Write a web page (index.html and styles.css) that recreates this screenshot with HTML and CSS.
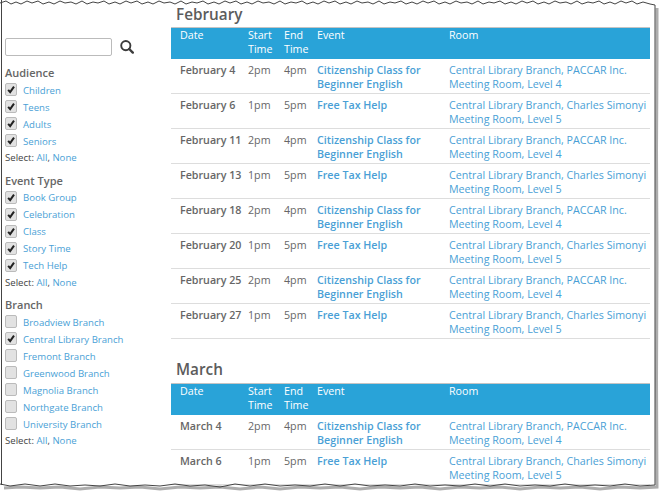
FILE: index.html
```html
<!DOCTYPE html>
<html lang="en">
<head>
<meta charset="utf-8">
<title>Events</title>
<link rel="stylesheet" href="styles.css">
</head>
<body>
<div class="frame">
  <aside class="side">
    <div class="search">
      <input class="search-box" type="text" aria-label="Search">
      <svg class="search-icon" viewBox="0 0 14 14"><circle cx="5.8" cy="5.6" r="4.6" fill="none" stroke="#3c3c3c" stroke-width="1.9"/><path d="M9.2 9 L12.8 12.6" stroke="#3c3c3c" stroke-width="2.4" stroke-linecap="round"/></svg>
    </div>
    <section class="group">
      <h3>Audience</h3>
      <div class="opt"><span class="cb on"><svg viewBox="0 0 12 12"><path d="M2.6 6.4 L5 9.2 L9.6 2.6" fill="none" stroke="#222" stroke-width="2.4"/></svg></span><a>Children</a></div>
      <div class="opt"><span class="cb on"><svg viewBox="0 0 12 12"><path d="M2.6 6.4 L5 9.2 L9.6 2.6" fill="none" stroke="#222" stroke-width="2.4"/></svg></span><a>Teens</a></div>
      <div class="opt"><span class="cb on"><svg viewBox="0 0 12 12"><path d="M2.6 6.4 L5 9.2 L9.6 2.6" fill="none" stroke="#222" stroke-width="2.4"/></svg></span><a>Adults</a></div>
      <div class="opt"><span class="cb on"><svg viewBox="0 0 12 12"><path d="M2.6 6.4 L5 9.2 L9.6 2.6" fill="none" stroke="#222" stroke-width="2.4"/></svg></span><a>Seniors</a></div>
      <p class="sel">Select: <a>All</a>, <a>None</a></p>
    </section>
    <section class="group">
      <h3>Event Type</h3>
      <div class="opt"><span class="cb on"><svg viewBox="0 0 12 12"><path d="M2.6 6.4 L5 9.2 L9.6 2.6" fill="none" stroke="#222" stroke-width="2.4"/></svg></span><a>Book Group</a></div>
      <div class="opt"><span class="cb on"><svg viewBox="0 0 12 12"><path d="M2.6 6.4 L5 9.2 L9.6 2.6" fill="none" stroke="#222" stroke-width="2.4"/></svg></span><a>Celebration</a></div>
      <div class="opt"><span class="cb on"><svg viewBox="0 0 12 12"><path d="M2.6 6.4 L5 9.2 L9.6 2.6" fill="none" stroke="#222" stroke-width="2.4"/></svg></span><a>Class</a></div>
      <div class="opt"><span class="cb on"><svg viewBox="0 0 12 12"><path d="M2.6 6.4 L5 9.2 L9.6 2.6" fill="none" stroke="#222" stroke-width="2.4"/></svg></span><a>Story Time</a></div>
      <div class="opt"><span class="cb on"><svg viewBox="0 0 12 12"><path d="M2.6 6.4 L5 9.2 L9.6 2.6" fill="none" stroke="#222" stroke-width="2.4"/></svg></span><a>Tech Help</a></div>
      <p class="sel">Select: <a>All</a>, <a>None</a></p>
    </section>
    <section class="group">
      <h3>Branch</h3>
      <div class="opt"><span class="cb"></span><a>Broadview Branch</a></div>
      <div class="opt"><span class="cb on"><svg viewBox="0 0 12 12"><path d="M2.6 6.4 L5 9.2 L9.6 2.6" fill="none" stroke="#222" stroke-width="2.4"/></svg></span><a>Central Library Branch</a></div>
      <div class="opt"><span class="cb"></span><a>Fremont Branch</a></div>
      <div class="opt"><span class="cb"></span><a>Greenwood Branch</a></div>
      <div class="opt"><span class="cb"></span><a>Magnolia Branch</a></div>
      <div class="opt"><span class="cb"></span><a>Northgate Branch</a></div>
      <div class="opt"><span class="cb"></span><a>University Branch</a></div>
      <p class="sel">Select: <a>All</a>, <a>None</a></p>
    </section>
  </aside>
  <main class="main">
    <h2>February</h2>
    <table>
      <colgroup><col class="c-date"><col class="c-start"><col class="c-end"><col class="c-event"><col class="c-room"></colgroup>
      <thead><tr><th>Date</th><th>Start Time</th><th>End Time</th><th>Event</th><th>Room</th></tr></thead>
      <tbody>
        <tr><td class="d">February 4</td><td>2pm</td><td>4pm</td><td><a class="ev">Citizenship Class for Beginner English</a></td><td><a>Central Library Branch, PACCAR Inc. Meeting Room, Level 4</a></td></tr>
        <tr><td class="d">February 6</td><td>1pm</td><td>5pm</td><td><a class="ev">Free Tax Help</a></td><td><a>Central Library Branch, Charles Simonyi Meeting Room, Level 5</a></td></tr>
        <tr><td class="d">February 11</td><td>2pm</td><td>4pm</td><td><a class="ev">Citizenship Class for Beginner English</a></td><td><a>Central Library Branch, PACCAR Inc. Meeting Room, Level 4</a></td></tr>
        <tr><td class="d">February 13</td><td>1pm</td><td>5pm</td><td><a class="ev">Free Tax Help</a></td><td><a>Central Library Branch, Charles Simonyi Meeting Room, Level 5</a></td></tr>
        <tr><td class="d">February 18</td><td>2pm</td><td>4pm</td><td><a class="ev">Citizenship Class for Beginner English</a></td><td><a>Central Library Branch, PACCAR Inc. Meeting Room, Level 4</a></td></tr>
        <tr><td class="d">February 20</td><td>1pm</td><td>5pm</td><td><a class="ev">Free Tax Help</a></td><td><a>Central Library Branch, Charles Simonyi Meeting Room, Level 5</a></td></tr>
        <tr><td class="d">February 25</td><td>2pm</td><td>4pm</td><td><a class="ev">Citizenship Class for Beginner English</a></td><td><a>Central Library Branch, PACCAR Inc. Meeting Room, Level 4</a></td></tr>
        <tr><td class="d">February 27</td><td>1pm</td><td>5pm</td><td><a class="ev">Free Tax Help</a></td><td><a>Central Library Branch, Charles Simonyi Meeting Room, Level 5</a></td></tr>
      </tbody>
    </table>
    <h2 class="next">March</h2>
    <table>
      <colgroup><col class="c-date"><col class="c-start"><col class="c-end"><col class="c-event"><col class="c-room"></colgroup>
      <thead><tr><th>Date</th><th>Start Time</th><th>End Time</th><th>Event</th><th>Room</th></tr></thead>
      <tbody>
        <tr><td class="d">March 4</td><td>2pm</td><td>4pm</td><td><a class="ev">Citizenship Class for Beginner English</a></td><td><a>Central Library Branch, PACCAR Inc. Meeting Room, Level 4</a></td></tr>
        <tr><td class="d">March 6</td><td>1pm</td><td>5pm</td><td><a class="ev">Free Tax Help</a></td><td><a>Central Library Branch, Charles Simonyi Meeting Room, Level 5</a></td></tr>
      </tbody>
    </table>
  </main>
</div>
<svg class="torn" viewBox="0 0 665 499" aria-hidden="true">
  <path class="edge-shadow" d="M657 8 L657 60 L656.5 150 L657 260 L656.5 380 L657 487 L640 488 L620 487 L600 489 L580 487 L560 488 L540 487 L520 489 L500 487 L480 488 L460 487 L440 489 L420 487 L400 488 L380 487 L360 489 L340 487 L320 488 L300 487 L280 489 L260 487 L240 489 L220 487 L200 488 L180 487 L160 489 L140 487 L120 488 L100 487 L80 489 L60 487 L40 488 L20 487 L4 488"/>
  <path class="edge-top" d="M0 3 L6 1 L11 4 L16 2 L21 4 L27 1 L32 3 L38 1 L43 4 L49 2 L54 4 L60 1 L65 3 L71 2 L76 4 L82 1 L87 4 L93 2 L98 3 L104 1 L109 4 L115 2 L120 4 L126 1 L131 3 L137 1 L142 4 L148 2 L153 4 L159 1 L164 3 L170 2 L175 4 L181 1 L186 4 L192 2 L197 3 L203 1 L208 4 L214 2 L219 4 L225 1 L230 3 L236 1 L241 4 L247 2 L252 4 L258 1 L263 3 L269 2 L274 4 L280 1 L285 4 L291 2 L296 3 L302 1 L307 4 L313 2 L318 4 L324 1 L329 3 L335 1 L340 4 L346 2 L351 4 L357 1 L362 3 L368 2 L373 4 L379 1 L384 4 L390 2 L395 3 L401 1 L406 4 L412 2 L417 4 L423 1 L428 3 L434 1 L439 4 L445 2 L450 4 L456 1 L461 3 L467 2 L472 4 L478 1 L483 4 L489 2 L494 3 L500 1 L505 4 L511 2 L516 4 L522 1 L527 3 L533 1 L538 4 L544 2 L549 4 L555 1 L560 3 L566 2 L571 4 L577 1 L582 4 L588 2 L593 3 L599 1 L604 4 L610 2 L615 4 L621 1 L626 3 L632 1 L637 4 L643 2 L650 4 L655 5"/>
  <path class="edge-line" d="M655 5 L655 485 L640 486 L625 484 L610 486 L595 485 L580 486 L565 484 L550 486 L535 485 L520 486 L505 484 L490 486 L475 484 L460 486 L445 485 L430 486 L415 484 L400 486 L385 485 L370 486 L355 484 L340 486 L325 484 L310 486 L295 485 L280 486 L265 484 L250 486 L235 484 L220 487 L205 485 L190 486 L175 484 L160 486 L145 485 L130 486 L115 484 L100 486 L85 485 L70 486 L55 484 L40 486 L25 484 L10 486 L0 484"/>
  <path class="edge-left" d="M1.5 0 L1.5 485"/>
</svg>
</body>
</html>
```
FILE: styles.css
```css
* { box-sizing: border-box; }
html, body { margin: 0; height: 499px; overflow: hidden; background: #fff; }
body { position: relative; font-family: "Open Sans", sans-serif; font-size: 10.7px; line-height: 14px; color: #666; }
a { color: #4a9fd6; }
.frame { display: flex; height: 485px; width: 655px; overflow: hidden; padding-left: 5px; }
.side { width: 166px; flex: none; padding-top: 38px; font-size: 9.6px; }
.search { display: flex; align-items: center; gap: 8px; margin-bottom: 9px; }
.search-box { width: 107px; height: 18px; border: 1px solid #bbb; border-radius: 2px; padding: 0; background: #fff; }
.search-icon { width: 14px; height: 14px; }
.group { margin-bottom: 7.5px; }
.group h3 { margin: 0; font-size: 11px; font-weight: 600; line-height: 16px; color: #666; }
.opt { display: flex; align-items: center; height: 17px; gap: 6px; }
.opt a { padding-top: 2px; }
.cb { width: 12px; height: 13px; flex: none; border: 1px solid #bbb; border-radius: 2px; background: #e2e2e2; display: flex; }
.cb svg { width: 10px; height: 11px; }
.sel { margin: 1px 0 0; color: #444; line-height: 15px; }
.main { width: 479px; flex: none; }
.main h2 { margin: 5px 0 4px 5px; font-size: 15.3px; line-height: 18px; font-weight: 600; color: #5c5c5c; }
.main h2.next { margin: 21px 0 5px 5px; }
table { border-collapse: separate; border-spacing: 0; table-layout: fixed; width: 479px; }
.c-date { width: 68px; } .c-start { width: 36px; } .c-end { width: 33px; } .c-event { width: 132px; } .c-room { width: 210px; }
th { background: #29a3d8; color: #fff; font-weight: 400; text-align: left; vertical-align: top; padding: 0 0 3px 9px; height: 32px; border-top: 1px solid #c4c4c4; }
td { vertical-align: top; padding: 4px 0 2px 9px; border-bottom: 1px solid #ddd; height: 35px; }
.d { font-weight: 600; white-space: nowrap; }
.ev { font-weight: 600; }
.torn { position: absolute; left: 0; top: 0; width: 665px; height: 499px; pointer-events: none; }
.torn path { fill: none; }
.edge-shadow { stroke: #777; stroke-width: 3; opacity: .6; }
.edge-top, .edge-line, .edge-left { stroke: #444; stroke-width: 1; }
```
